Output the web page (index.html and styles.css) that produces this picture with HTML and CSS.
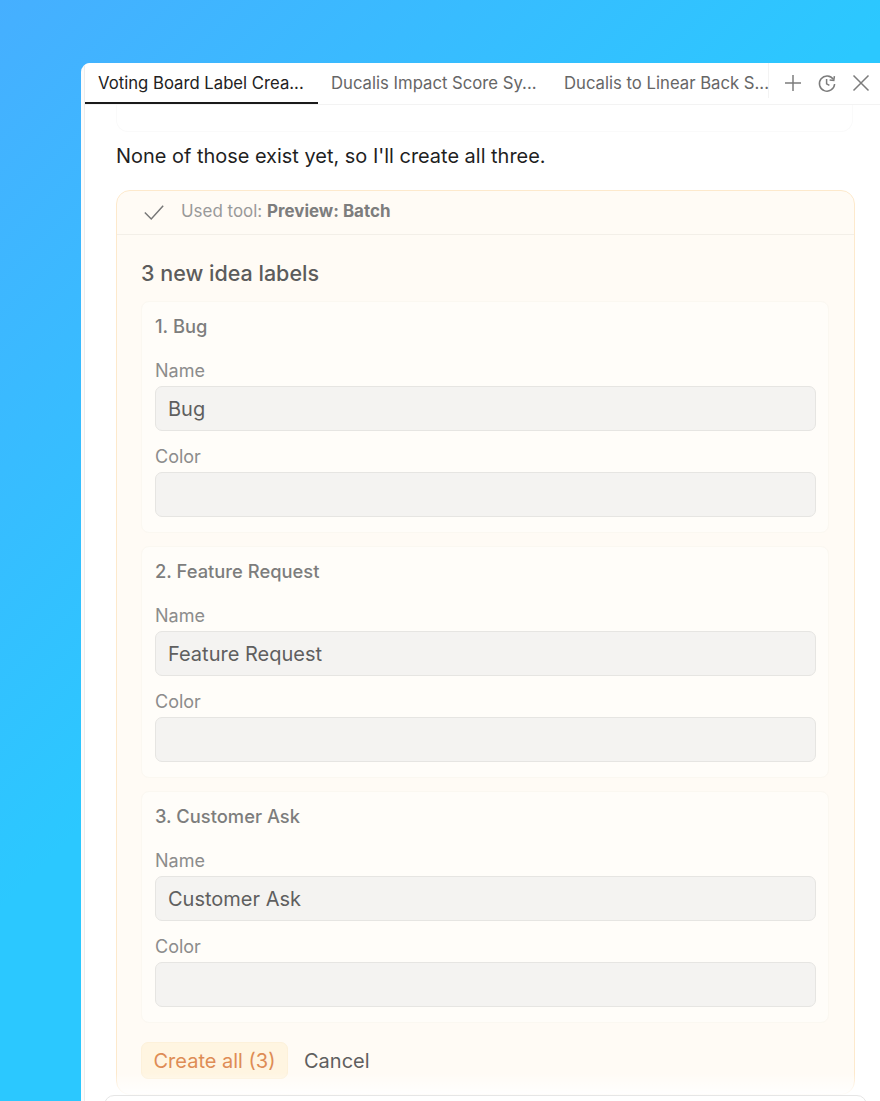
FILE: index.html
```html
<!DOCTYPE html>
<html lang="en">
<head>
<meta charset="utf-8">
<title>Voting Board Label Creation</title>
<link rel="stylesheet" href="styles.css">
</head>
<body>
<div class="window">
  <div class="inner">
    <header class="tabs">
      <div class="tab active">Voting Board Label Crea...</div>
      <div class="tab second">Ducalis Impact Score Sy...</div>
      <div class="tab third">Ducalis to Linear Back S...</div>
      <div class="actions">
        <svg class="icon" viewBox="0 0 20 20"><path d="M10 2v16M2 10h16"/></svg>
        <svg class="icon" viewBox="0 0 20 20"><path d="M16.4 6.4A7.6 7.6 0 1 0 17.6 11"/><path d="M9.6 6v4.8l2.8 1.6"/><path d="M12.6 7l4.2.4.6-4.2"/></svg>
        <svg class="icon" viewBox="0 0 20 20"><path d="M2.5 2.5l15 15M17.5 2.5l-15 15"/></svg>
      </div>
    </header>
    <main class="content">
      <div class="prev-card"></div>
      <p class="message">None of those exist yet, so I'll create all three.</p>
      <section class="tool">
        <div class="tool-head">
          <svg class="check" viewBox="0 0 24 24"><path d="M2 11.5l7 7L22 4"/></svg>
          <span class="used">Used tool: <b>Preview: Batch</b></span>
        </div>
        <div class="tool-body">
          <h2 class="title">3 new idea labels</h2>
          <div class="item">
            <h3 class="item-title">1. Bug</h3>
            <label class="lbl">Name</label>
            <div class="field">Bug</div>
            <label class="lbl">Color</label>
            <div class="field"></div>
          </div>
          <div class="item">
            <h3 class="item-title">2. Feature Request</h3>
            <label class="lbl">Name</label>
            <div class="field">Feature Request</div>
            <label class="lbl">Color</label>
            <div class="field"></div>
          </div>
          <div class="item">
            <h3 class="item-title">3. Customer Ask</h3>
            <label class="lbl">Name</label>
            <div class="field">Customer Ask</div>
            <label class="lbl">Color</label>
            <div class="field"></div>
          </div>
          <div class="buttons">
            <button class="btn primary">Create all (3)</button>
            <button class="btn">Cancel</button>
          </div>
        </div>
      </section>
      <div class="fade"></div>
      <div class="composer"></div>
    </main>
  </div>
</div>
</body>
</html>
```
FILE: styles.css
```css
* { box-sizing: border-box; }
html, body { margin: 0; height: 100%; overflow: hidden; }
body {
  background: linear-gradient(135deg, #46afff 0%, #2bc8ff 46%, #2bc8ff 100%);
  padding: 63px 0 0 81px;
  font-family: Inter, "Liberation Sans", sans-serif;
}
.window {
  width: 799px;
  height: 1038px;
  background: #fcfcfc;
  border-radius: 9px 0 0 0;
  padding-left: 3px;
  overflow: hidden;
}
.inner {
  background: #fff;
  height: 100%;
  position: relative;
  overflow: hidden;
  border-left: 1px solid #ececec;
}
.tabs {
  height: 42px;
  display: flex;
  align-items: stretch;
  border-bottom: 1px solid #f3f3f3;
  font-size: 16.7px;
  color: #666;
}
.tab { padding: 10px 0 0 13px; white-space: nowrap; }
.tab.active {
  width: 233px;
  color: #222;
  border-bottom: 2px solid #1a1a1a;
}
.tab.second { width: 233px; }
.tab.third { width: 218px; border-right: 1px solid #f3f3f3; margin-bottom: 6px; }
.actions { display: flex; align-items: center; gap: 14px; padding-left: 14px; margin-top: -1px; }
.icon { width: 20px; height: 20px; fill: none; stroke: #7c7c7c; stroke-width: 1.5; }
.content { padding: 0 0 0 31px; position: relative; }
.prev-card {
  width: 737px;
  height: 27px;
  border: 1px solid #fafafa;
  border-top: 0;
  border-radius: 0 0 12px 12px;
}
.message {
  margin: 11px 0 0;
  font-size: 19.95px;
  line-height: 26px;
  color: #1f1f1f;
}
.tool {
  margin-top: 21px;
  width: 739px;
  height: 905px;
  background: #fffbf5;
  border: 1px solid #fde9cc;
  border-radius: 14px;
}
.tool-head {
  height: 44px;
  display: flex;
  align-items: center;
  padding: 0 0 3px 26px;
  border-bottom: 1px solid #f3efe8;
  font-size: 16.95px;
  color: #999;
}
.check { width: 22px; height: 22px; margin-top: 3px; fill: none; stroke: #777; stroke-width: 1.6; flex: none; }
.used { margin-left: 16px; }
.used b { color: #7d7d7d; font-weight: 700; }
.tool-body { padding: 24px 25px 0 24px; }
.title {
  margin: 0 0 13px;
  font-size: 21.5px;
  line-height: 29px;
  font-weight: 500;
  color: #5c5c5c;
}
.item {
  height: 232px;
  margin-bottom: 13px;
  padding: 12px 12px 0 13px;
  background: #fffdf9;
  border: 1px solid #fbf8f1;
  border-radius: 8px;
}
.item-title {
  margin: 0 0 20px;
  font-size: 18.35px;
  line-height: 24px;
  font-weight: 500;
  color: #7d7d7d;
}
.lbl {
  display: block;
  font-size: 18px;
  line-height: 26px;
  color: #8c8c8c;
  margin-bottom: 1.5px;
}
.field {
  height: 45.5px;
  margin-bottom: 13px;
  padding: 0 12px;
  background: #f4f3f1;
  border: 1px solid #e6e5e2;
  border-bottom-width: 1.5px;
  border-radius: 7px;
  font-size: 20px;
  line-height: 44px;
  color: #5f5f5f;
}
.buttons { display: flex; align-items: center; gap: 16px; margin-top: 19px; }
.btn {
  font: inherit;
  font-size: 20px;
  height: 37px;
  padding: 0;
  border: 0;
  background: transparent;
  color: #5f5f5f;
}
.btn.primary {
  width: 147px;
  background: #fff5e1;
  border: 1px solid #fdf1da;
  border-radius: 7px;
  color: #de8c55;
}
.fade {
  position: absolute;
  left: 20px;
  right: 0;
  top: 968px;
  height: 24px;
  background: linear-gradient(to bottom, rgba(255,255,255,0), #fff);
}
.composer {
  position: absolute;
  left: 19px;
  top: 990px;
  width: 763px;
  height: 40px;
  background: #fff;
  border: 1px solid #e6e6e6;
  border-radius: 10px;
}
```
